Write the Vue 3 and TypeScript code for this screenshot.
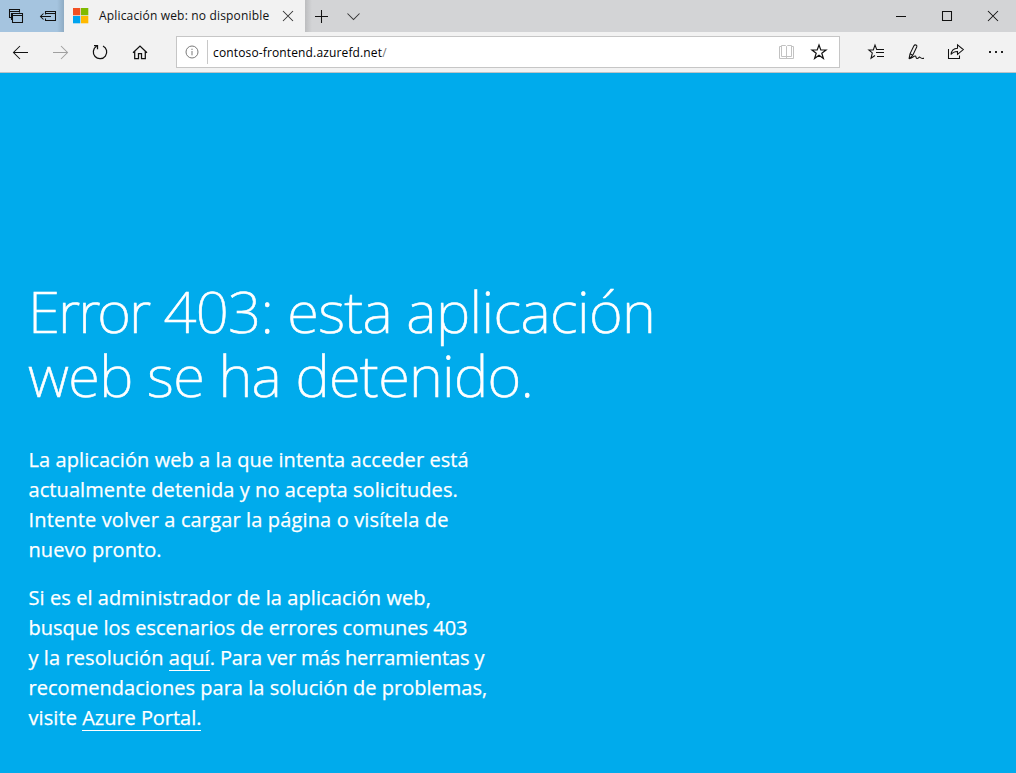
<script setup lang="ts">
interface Line {
  text: string
  fit: string
}

const intro: Line[] = [
  { text: 'La aplicación web a la que intenta acceder está', fit: 'wide' },
  { text: 'actualmente detenida y no acepta solicitudes.', fit: 'wide' },
  { text: 'Intente volver a cargar la página o visítela de', fit: 'wider' },
  { text: 'nuevo pronto.', fit: 'wide' },
]
</script>

<template>
  <div class="browser">
    <header class="titlebar">
      <div class="tab-tools">
        <svg class="ic" width="16" height="16" viewBox="0 0 16 16">
          <path d="M4 9.500H1.500V1.500H11.500V4.500M1.500 3.500H11.500M4.500 11.500H3.500V5M4.500 5.500H14.500V14.500H4.500ZM4.500 7.500H14.500" />
        </svg>
        <svg class="ic" width="18" height="16" viewBox="0 0 18 16">
          <path d="M6.500 6.500V3.500H16.500V12.500H6.500V10.500M6.500 5.500H16.500M1.500 8.500H12M4.500 5.500L1.500 8.500L4.500 11.500" />
        </svg>
      </div>
      <div class="tab">
        <svg class="logo" width="16" height="16" viewBox="0 0 16 16">
          <rect width="7.300" height="7.300" fill="#f25022" />
          <rect x="8" width="7.300" height="7.300" fill="#7fba00" />
          <rect y="8" width="7.300" height="7.300" fill="#00a4ef" />
          <rect x="8" y="8" width="7.300" height="7.300" fill="#ffb900" />
        </svg>
        <span class="tab-title">Aplicación web: no disponible</span>
        <svg class="ic close" width="12" height="12" viewBox="0 0 12 12"><path d="M1 1L11 11M11 1L1 11" /></svg>
      </div>
      <div class="tab-actions">
        <svg class="ic" width="14" height="14" viewBox="0 0 14 14"><path d="M6.500 0V13M0 6.500H13" /></svg>
        <svg class="ic thin" width="14" height="14" viewBox="0 0 14 14"><path d="M.5 3.500L6.500 9.500L12.500 3.500" /></svg>
      </div>
      <div class="window-actions">
        <svg class="ic" width="12" height="12" viewBox="0 0 12 12"><path d="M1 6.500H11" /></svg>
        <svg class="ic" width="12" height="12" viewBox="0 0 12 12"><path d="M1.500 1.500H10.500V10.500H1.500Z" /></svg>
        <svg class="ic" width="12" height="12" viewBox="0 0 12 12"><path d="M1 1L11 11M11 1L1 11" /></svg>
      </div>
    </header>

    <nav class="toolbar">
      <div class="nav-actions">
        <svg class="ic" width="18" height="18" viewBox="0 0 18 18"><path d="M1.500 9.500H16M8 3L1.500 9.500L8 16" /></svg>
        <svg class="ic off" width="18" height="18" viewBox="0 0 18 18"><path d="M1 9.500H15.500M9 3L15.500 9.500L9 16" /></svg>
        <svg class="ic reload" width="18" height="18" viewBox="0 0 18 18">
          <path d="M4.500 3.300A6.700 6.700 0 1 0 11 3M2 2.500H5.500V6.200" />
        </svg>
        <svg class="ic house" width="18" height="18" viewBox="0 0 18 18">
          <path d="M1 9.800L8 3L15 9.800M2.700 8.500V15.500H6.500V10.500H9.500V15.500H13.300V8.500" />
        </svg>
      </div>
      <div class="address">
        <svg class="info" width="14" height="14" viewBox="0 0 14 14">
          <circle cx="7" cy="7" r="6" /><path d="M7 6V10.300M7 3.700V5" />
        </svg>
        <i class="divider"></i>
        <span class="url">contoso-frontend.azurefd.net<span class="slash">/</span></span>
        <svg class="book" width="16" height="16" viewBox="0 0 16 16">
          <path d="M2.500 2.500H.5V14.500H14.500V2.500H12.500M2.500 12.500V1.500H6.500L7.500 2.500L8.500 1.500H12.500V12.500H2.500M7.500 2.500V14" />
        </svg>
        <svg class="ic star" width="18" height="18" viewBox="0 0 18 18">
          <path d="M9 2L10.800 7H16L11.800 10.200L13.400 15.500L9 12.300L4.600 15.500L6.200 10.200L2 7H7.200Z" />
        </svg>
      </div>
      <div class="page-actions">
        <svg class="ic" width="18" height="18" viewBox="0 0 18 18">
          <path d="M11 6.500H9.700L8 2L6.300 6.900H1.800L5.300 9.900L4 15.300L8 12.500M9.500 6.500H17M9 9.500H17M10 13.500H17" />
        </svg>
        <svg class="ic" width="18" height="18" viewBox="0 0 18 18">
          <path d="M2 15.800L3 10.800L6.800 3C7.700 1.300 10.500 1.500 9.700 4L5.800 12.300L2 15.800M3 10.800L5.800 12.300M2 15.800C5 15.500 7 12.500 8.300 13S8.500 15.500 10.200 15.500S12 13.200 13.200 14.500S15 15.500 17 15.300" />
        </svg>
        <svg class="ic" width="18" height="18" viewBox="0 0 18 18">
          <path d="M1.500 6V15.500H12.500V12.500M4 11.500C4.500 7.300 6.700 5.300 10.500 5.200V1.800L16.300 6.600L10.500 11.400V8.400C7.500 8.500 5.300 9.400 4 11.500Z" />
        </svg>
        <svg class="dots" width="18" height="18" viewBox="0 0 18 18">
          <path d="M2 8H4V10H2ZM8 8H10V10H8ZM14 8H16V10H14Z" />
        </svg>
      </div>
    </nav>

    <main class="content">
      <h1>
        <span><b class="error">Error</b><b class="code"> 403: esta </b><b class="app">aplicación</b></span>
        <span class="second">web se ha detenido.</span>
      </h1>
      <p><span v-for="line in intro" :key="line.text" :class="line.fit">{{ line.text }}</span></p>
      <p>
        <span class="wide">Si es el administrador de la aplicación web,</span>
        <span>busque los escenarios de errores comunes 403</span>
        <span><b class="wide">y la resolución <a>aquí</a></b><b class="narrow">. Para ver más herramientas y</b></span>
        <span class="list">recomendaciones para la solución de problemas,</span>
        <span><b class="wide">visite </b><a class="portal">Azure Portal.</a></span>
      </p>
    </main>
  </div>
</template>

<style>
body {
  margin: 0;
}
</style>

<style scoped>
.browser {
  display: flex;
  flex-direction: column;
  height: 773px;
  overflow: hidden;
  background: #00abec;
  font-family: 'Open Sans', 'Noto Sans', sans-serif;
}
svg {
  display: block;
  flex: none;
}
.ic {
  fill: none;
  stroke: #111;
  stroke-width: 1.05;
}
.titlebar {
  display: flex;
  flex: none;
  height: 32px;
  background: #d3d4d6;
}
.tab-tools {
  display: flex;
  gap: 15px;
  box-sizing: border-box;
  width: 64px;
  padding: 8px 0 0 8px;
  background: linear-gradient(90deg, #a5c4df 57px, #8eabc3);
}
.tab {
  display: flex;
  align-items: center;
  box-sizing: border-box;
  width: 241px;
  padding-left: 9px;
  background: #f2f2f2;
}
.tab-title {
  width: 183px;
  margin: -1px 0 0 10px;
  color: #111;
  font-size: 12px;
  letter-spacing: 0.17px;
  white-space: nowrap;
}
.close {
  stroke: #333;
}
.tab-actions {
  display: flex;
  flex: 1;
  gap: 18px;
  padding: 10px 0 0 10px;
  background: linear-gradient(90deg, #bcbdbf, #d3d4d6 7px);
}
.thin {
  stroke: #333;
}
.window-actions {
  display: flex;
  gap: 34px;
  padding: 10px 17px 0 0;
}
.toolbar {
  display: flex;
  flex: none;
  box-sizing: border-box;
  height: 41px;
  border-bottom: 1px solid #bdc3c7;
  background: #f2f2f2;
}
.nav-actions {
  display: flex;
  gap: 22px;
  box-sizing: border-box;
  width: 176px;
  padding: 11px 0 0 12px;
}
.nav-actions .off {
  stroke: #a0a0a0;
}
.reload,
.house {
  stroke-width: 1.25;
}
.address {
  display: flex;
  align-items: center;
  box-sizing: border-box;
  width: 664px;
  height: 32px;
  margin-top: 4px;
  padding: 0 11px 0 8px;
  border: 1px solid #c6c6c6;
  background: #fff;
}
.info {
  fill: none;
  stroke: #7a7a7a;
}
.divider {
  width: 1px;
  height: 24px;
  margin: 0 5px 0 8px;
  background: #c8c8c8;
}
.url {
  flex: 1;
  color: #000;
  font-size: 12px;
  letter-spacing: 0.14px;
}
.slash {
  color: #777;
}
.book {
  margin-right: 15px;
  fill: none;
  stroke: #c2c2c2;
}
.star {
  stroke-width: 1.2;
}
.page-actions {
  display: flex;
  gap: 22px;
  padding: 11px 0 0 27px;
}
.dots {
  fill: #222;
}
.content {
  padding: 206px 0 0 28px;
  color: #fff;
}
.content span {
  display: block;
  white-space: nowrap;
}
h1 {
  margin: 0;
  font: 250 58px/64px 'Noto Sans', 'Open Sans', sans-serif;
  -webkit-text-stroke: 0.6px #fff;
}
h1 b {
  font-weight: 250;
}
.error {
  letter-spacing: -2px;
}
.code {
  letter-spacing: -0.75px;
}
.app {
  letter-spacing: -0.6px;
}
.second {
  letter-spacing: -0.7px;
}
p {
  margin: 38.200px 0 0 0.500px;
  font-size: 20px;
  line-height: 29.9px;
  -webkit-text-stroke: 0.25px #fff;
}
p + p {
  margin-top: 18.300px;
}
b {
  font-weight: 400;
  white-space: pre;
}
.wide {
  letter-spacing: 0.08px;
}
.wider {
  letter-spacing: 0.14px;
}
.narrow {
  letter-spacing: -0.12px;
}
.list {
  letter-spacing: 0.03px;
}
a {
  display: inline-block;
  height: 27px;
  border-bottom: 1px solid #fff;
  line-height: 29.9px;
  vertical-align: top;
}
.portal {
  letter-spacing: -0.04px;
}
</style>
